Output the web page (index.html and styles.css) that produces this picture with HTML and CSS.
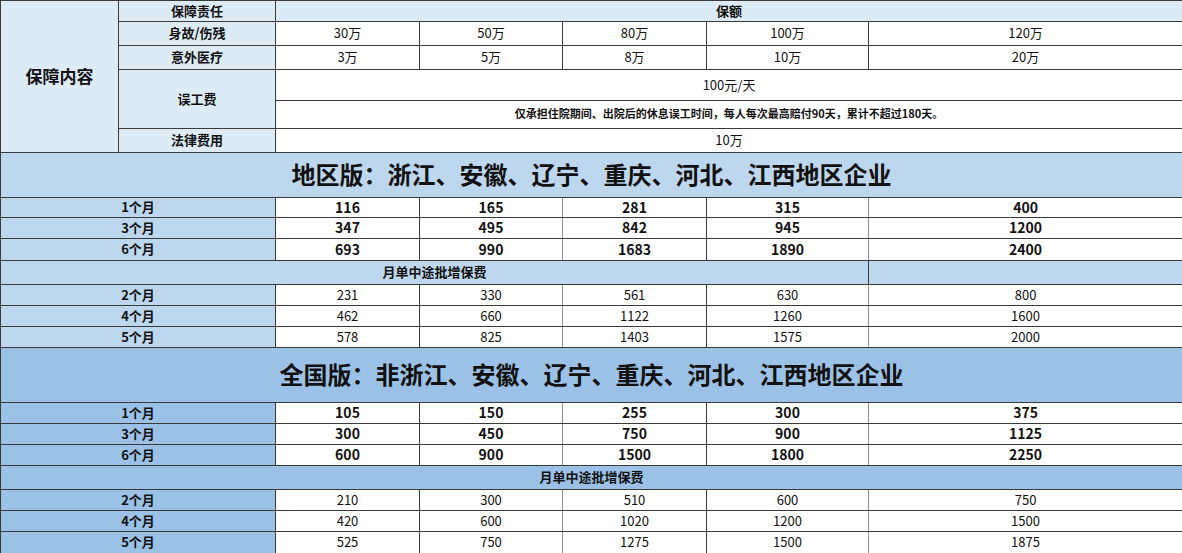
FILE: index.html
```html
<!DOCTYPE html>
<html lang="zh-CN">
<head>
<meta charset="utf-8">
<title>保障内容</title>
<link rel="stylesheet" href="styles.css">
</head>
<body>
<table class="grid">
  <colgroup>
    <col class="c0"><col class="c1"><col class="c2"><col class="c3"><col class="c4"><col class="c5"><col class="c6">
  </colgroup>
  <tbody>
    <tr class="h21">
      <td class="pale head big" rowspan="6">保障内容</td>
      <td class="pale head">保障责任</td>
      <td class="pale head" colspan="5">保额</td>
    </tr>
    <tr class="h24">
      <td class="pale head">身故/伤残</td>
      <td>30万</td><td>50万</td><td>80万</td><td>100万</td><td>120万</td>
    </tr>
    <tr class="h24">
      <td class="pale head">意外医疗</td>
      <td>3万</td><td>5万</td><td>8万</td><td>10万</td><td>20万</td>
    </tr>
    <tr class="h31">
      <td class="pale head" rowspan="2">误工费</td>
      <td colspan="5">100元/天</td>
    </tr>
    <tr class="h28">
      <td class="note" colspan="5">仅承担住院期间、出院后的休息误工时间，每人每次最高赔付90天，累计不超过180天。</td>
    </tr>
    <tr class="h24">
      <td class="pale head">法律费用</td>
      <td colspan="5">10万</td>
    </tr>

    <tr class="h45">
      <td class="mid title" colspan="7">地区版：浙江、安徽、辽宁、重庆、河北、江西地区企业</td>
    </tr>
    <tr class="h20 bold"><td class="mid head" colspan="2">1个月</td><td>116</td><td class="lg">165</td><td>281</td><td class="lg">315</td><td>400</td></tr>
    <tr class="h21 bold"><td class="mid head" colspan="2">3个月</td><td>347</td><td class="lg">495</td><td>842</td><td class="lg">945</td><td>1200</td></tr>
    <tr class="h22 bold"><td class="mid head" colspan="2">6个月</td><td>693</td><td class="lg">990</td><td>1683</td><td class="lg">1890</td><td>2400</td></tr>
    <tr class="h24"><td class="mid head" colspan="6">月单中途批增保费</td><td class="mid"></td></tr>
    <tr class="h21"><td class="mid head" colspan="2">2个月</td><td>231</td><td class="lg">330</td><td>561</td><td class="lg">630</td><td>800</td></tr>
    <tr class="h21"><td class="mid head" colspan="2">4个月</td><td>462</td><td class="lg">660</td><td>1122</td><td class="lg">1260</td><td>1600</td></tr>
    <tr class="h21"><td class="mid head" colspan="2">5个月</td><td>578</td><td class="lg">825</td><td>1403</td><td class="lg">1575</td><td>2000</td></tr>

    <tr class="h55">
      <td class="deep title" colspan="7">全国版：非浙江、安徽、辽宁、重庆、河北、江西地区企业</td>
    </tr>
    <tr class="h21 bold"><td class="deep head" colspan="2">1个月</td><td>105</td><td class="lg">150</td><td>255</td><td class="lg">300</td><td>375</td></tr>
    <tr class="h21 bold"><td class="deep head" colspan="2">3个月</td><td>300</td><td class="lg">450</td><td>750</td><td class="lg">900</td><td>1125</td></tr>
    <tr class="h21 bold"><td class="deep head" colspan="2">6个月</td><td>600</td><td class="lg">900</td><td>1500</td><td class="lg">1800</td><td>2250</td></tr>
    <tr class="h24"><td class="deep head" colspan="7">月单中途批增保费</td></tr>
    <tr class="h21"><td class="deep head" colspan="2">2个月</td><td>210</td><td class="lg">300</td><td>510</td><td class="lg">600</td><td>750</td></tr>
    <tr class="h21"><td class="deep head" colspan="2">4个月</td><td>420</td><td class="lg">600</td><td>1020</td><td class="lg">1200</td><td>1500</td></tr>
    <tr class="h22"><td class="deep head" colspan="2">5个月</td><td>525</td><td class="lg">750</td><td>1275</td><td class="lg">1500</td><td>1875</td></tr>
  </tbody>
</table>
</body>
</html>
```

FILE: styles.css
```css
html, body {
  margin: 0;
  padding: 0;
  background: #ffffff;
}

body {
  font-family: "Noto Sans CJK SC", "Noto Sans", sans-serif;
  color: #111;
}

.grid {
  border-collapse: collapse;
  table-layout: fixed;
  width: 1182px;
}

.c0 { width: 118px; }
.c1 { width: 157px; }
.c2 { width: 144px; }
.c3 { width: 143px; }
.c4 { width: 144px; }
.c5 { width: 162px; }
.c6 { width: 314px; }

.grid td {
  border: 1px solid #3a3a3a;
  padding: 0 0 2px 0;
  text-align: center;
  vertical-align: middle;
  font-size: 13px;
  line-height: 1;
  background: #ffffff;
  white-space: nowrap;
  overflow: hidden;
}

.grid td.lg {
  border-left-color: #8f8f8f;
  border-right-color: #8f8f8f;
}

.h20 { height: 20px; }
.h21 { height: 21px; }
.h22 { height: 22px; }
.h24 { height: 24px; }
.h28 { height: 28px; }
.h31 { height: 31px; }
.h45 { height: 45px; }
.h55 { height: 55px; }

.grid td.pale { background: #ddebf7; }
.grid td.mid { background: #bdd7ee; }
.grid td.deep { background: #9bc2e6; }

.head { font-weight: bold; }
.bold td { font-weight: bold; font-size: 14px; }
.bold td.head { font-size: 13px; }

.grid td.big { font-size: 17px; }

.grid td.note {
  font-size: 11px;
  font-weight: bold;
}

.grid td.title {
  font-size: 24px;
  font-weight: bold;
}
```
